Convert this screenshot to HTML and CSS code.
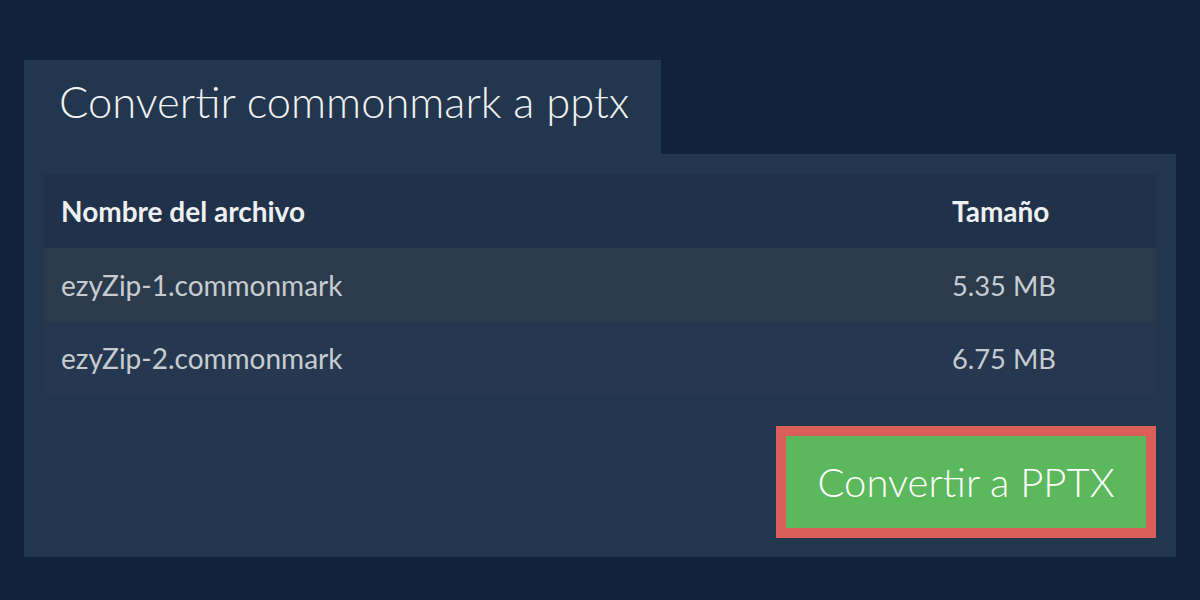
FILE: index.html
```html
<!DOCTYPE html>
<html lang="es">
<head>
<meta charset="utf-8">
<title>Convertir commonmark a pptx</title>
<link rel="stylesheet" href="styles.css">
</head>
<body>
<main class="wrap">
  <div class="tab"><h1 class="title">Convertir commonmark a pptx</h1></div>
  <section class="panel">
    <table class="files">
      <thead>
        <tr><th class="name">Nombre del archivo</th><th class="size">Tamaño</th></tr>
      </thead>
      <tbody>
        <tr class="odd"><td class="name">ezyZip-1.commonmark</td><td class="size">5.35 MB</td></tr>
        <tr class="even"><td class="name">ezyZip-2.commonmark</td><td class="size">6.75 MB</td></tr>
      </tbody>
    </table>
    <div class="actions">
      <button class="convert" type="button">Convertir a PPTX</button>
    </div>
  </section>
</main>
</body>
</html>
```

FILE: styles.css
```css
* { box-sizing: border-box; }
html, body { margin: 0; padding: 0; }
body {
  background: #10233a;
  font-family: Lato, "Open Sans", "Liberation Sans", sans-serif;
  width: 1200px;
  height: 600px;
  overflow: hidden;
}
.wrap {
  padding: 60px 24px 0 24px;
}
.tab {
  display: inline-block;
  width: 637px;
  height: 94px;
  background: #22364e;
  padding: 0 0 0 35px;
}
.title {
  margin: 0;
  font-weight: 300;
  font-size: 43.5px;
  line-height: 82px;
  color: #f1f2f3;
  letter-spacing: 0;
}
.panel {
  background: #22364e;
  width: 1152px;
  padding: 20px 20px 19px 20px;
}
.files {
  width: 1112px;
  border-collapse: collapse;
  table-layout: fixed;
}
.files th, .files td {
  text-align: left;
  padding: 0 0 0 17px;
}
.files th {
  height: 74px;
  background: #1f3249;
  color: #eef0f2;
  font-weight: 700;
  font-size: 28px;
}
.files td {
  font-size: 28px;
  font-weight: 400;
  color: #c7ccd2;
}
.files td.size { font-size: 27.3px; }
.files tr.odd td { background: #2b3b4c; height: 74px; }
.files tr.even td { background: #25384f; height: 72px; }
.files .size { width: 221px; }
.actions {
  display: flex;
  justify-content: flex-end;
  margin-top: 32px;
}
.convert {
  width: 380px;
  height: 112px;
  border: 10px solid #da5f5b;
  background: #5cb85c;
  color: #ffffff;
  font-family: Lato, "Open Sans", "Liberation Sans", sans-serif;
  font-weight: 300;
  font-size: 40px;
  padding: 0;
  cursor: pointer;
}
```
